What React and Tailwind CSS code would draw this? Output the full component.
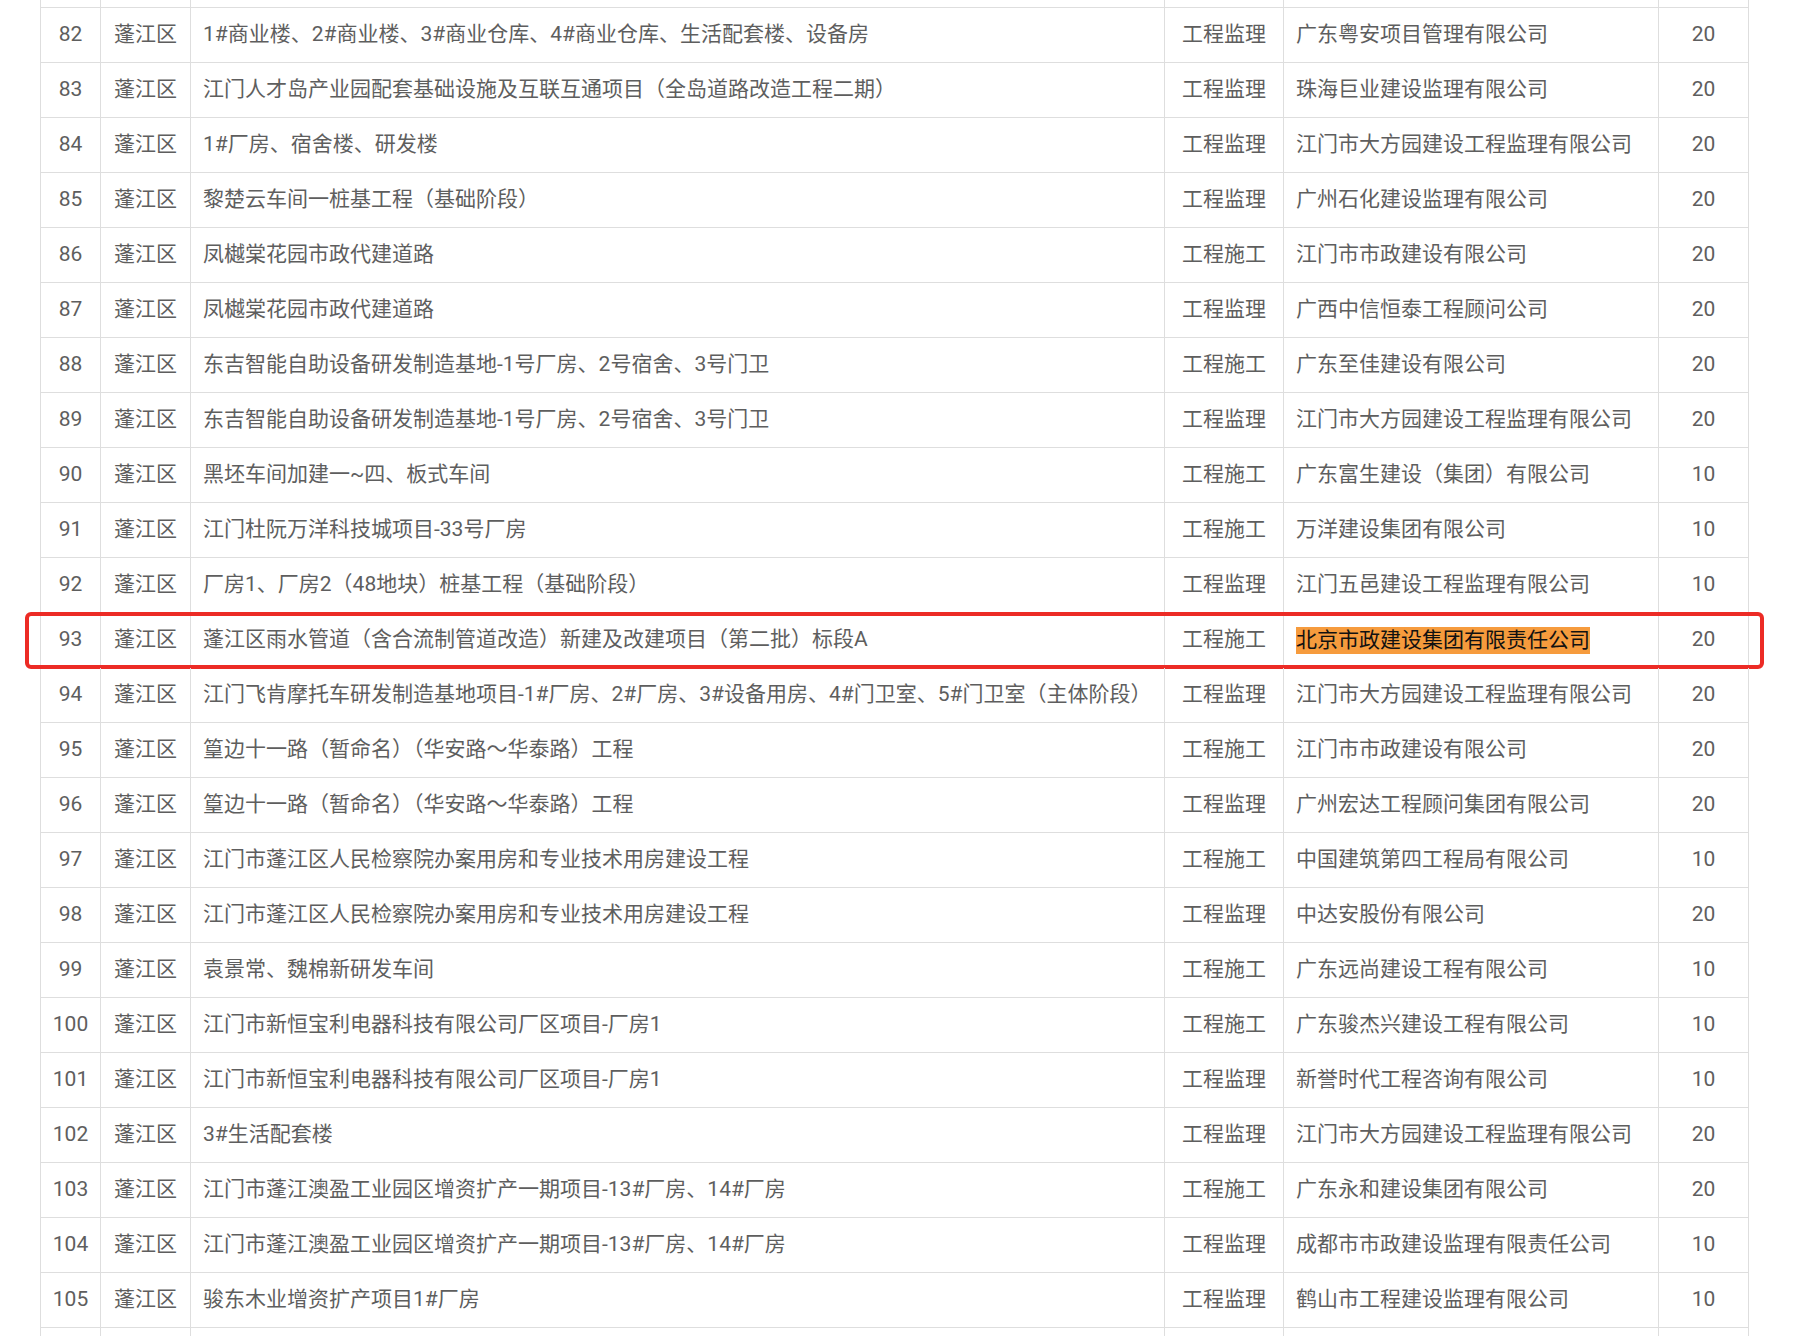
import React from 'react';

const rows = [
    ['82', '1#商业楼、2#商业楼、3#商业仓库、4#商业仓库、生活配套楼、设备房', '工程监理', '广东粤安项目管理有限公司', '20'],
    ['83', '江门人才岛产业园配套基础设施及互联互通项目（全岛道路改造工程二期）', '工程监理', '珠海巨业建设监理有限公司', '20'],
    ['84', '1#厂房、宿舍楼、研发楼', '工程监理', '江门市大方园建设工程监理有限公司', '20'],
    ['85', '黎楚云车间一桩基工程（基础阶段）', '工程监理', '广州石化建设监理有限公司', '20'],
    ['86', '凤樾棠花园市政代建道路', '工程施工', '江门市市政建设有限公司', '20'],
    ['87', '凤樾棠花园市政代建道路', '工程监理', '广西中信恒泰工程顾问公司', '20'],
    ['88', '东吉智能自助设备研发制造基地-1号厂房、2号宿舍、3号门卫', '工程施工', '广东至佳建设有限公司', '20'],
    ['89', '东吉智能自助设备研发制造基地-1号厂房、2号宿舍、3号门卫', '工程监理', '江门市大方园建设工程监理有限公司', '20'],
    ['90', '黑坯车间加建一~四、板式车间', '工程施工', '广东富生建设（集团）有限公司', '10'],
    ['91', '江门杜阮万洋科技城项目-33号厂房', '工程施工', '万洋建设集团有限公司', '10'],
    ['92', '厂房1、厂房2（48地块）桩基工程（基础阶段）', '工程监理', '江门五邑建设工程监理有限公司', '10'],
    ['93', '蓬江区雨水管道（含合流制管道改造）新建及改建项目（第二批）标段A', '工程施工', '北京市政建设集团有限责任公司', '20'],
    ['94', '江门飞肯摩托车研发制造基地项目-1#厂房、2#厂房、3#设备用房、4#门卫室、5#门卫室（主体阶段）', '工程监理', '江门市大方园建设工程监理有限公司', '20'],
    ['95', '篁边十一路（暂命名）（华安路～华泰路）工程', '工程施工', '江门市市政建设有限公司', '20'],
    ['96', '篁边十一路（暂命名）（华安路～华泰路）工程', '工程监理', '广州宏达工程顾问集团有限公司', '20'],
    ['97', '江门市蓬江区人民检察院办案用房和专业技术用房建设工程', '工程施工', '中国建筑第四工程局有限公司', '10'],
    ['98', '江门市蓬江区人民检察院办案用房和专业技术用房建设工程', '工程监理', '中达安股份有限公司', '20'],
    ['99', '袁景常、魏棉新研发车间', '工程施工', '广东远尚建设工程有限公司', '10'],
    ['100', '江门市新恒宝利电器科技有限公司厂区项目-厂房1', '工程施工', '广东骏杰兴建设工程有限公司', '10'],
    ['101', '江门市新恒宝利电器科技有限公司厂区项目-厂房1', '工程监理', '新誉时代工程咨询有限公司', '10'],
    ['102', '3#生活配套楼', '工程监理', '江门市大方园建设工程监理有限公司', '20'],
    ['103', '江门市蓬江澳盈工业园区增资扩产一期项目-13#厂房、14#厂房', '工程施工', '广东永和建设集团有限公司', '20'],
    ['104', '江门市蓬江澳盈工业园区增资扩产一期项目-13#厂房、14#厂房', '工程监理', '成都市市政建设监理有限责任公司', '10'],
    ['105', '骏东木业增资扩产项目1#厂房', '工程监理', '鹤山市工程建设监理有限公司', '10'],
];

const grid = 'grid grid-cols-[60px_90px_974px_119px_375px_90px] h-[55px] border-b border-[#dedede] relative';
const cell = 'flex items-center border-r border-[#dedede] whitespace-nowrap';

const Row = ({ row, blank }) => {
    const [no, name, type, company, score] = row || ['', '', '', '', ''];
    const marked = no === '93';
    return (
        <div className={grid}>
            <div className={`${cell} justify-center`}>{no}</div>
            <div className={`${cell} justify-center`}>{blank ? '' : '蓬江区'}</div>
            <div className={`${cell} px-3`}>{name}</div>
            <div className={`${cell} justify-center`}>{type}</div>
            <div className={`${cell} px-3`}>
                {marked ? (
                    <span className="inline-block bg-[#f69b3d] text-[#111] leading-[27px]">{company}</span>
                ) : (
                    company
                )}
            </div>
            <div className={`${cell} justify-center`}>{score}</div>

            {/* red mark around the row */}
            {marked && (
                <div className="absolute left-[-16px] right-[-15px] top-[-1px] bottom-[-2px] border-[4px] border-[#ec2b25] rounded-[6px] pointer-events-none" />
            )}
        </div>
    );
};

const App = () => {
    return (
        <div
            className="bg-white min-h-[1336px] h-[1336px] overflow-hidden text-[21px] text-[#5e5e5e]"
            style={{ fontFamily: "Roboto, 'Noto Sans CJK SC', sans-serif" }}
        >
            <div className="ml-[40px] w-[1709px] -mt-[47px] border-l border-[#dedede]">
                <Row blank />
                {rows.map((r) => (
                    <Row key={r[0]} row={r} />
                ))}
                <Row blank />
            </div>
        </div>
    );
};

export default App;
